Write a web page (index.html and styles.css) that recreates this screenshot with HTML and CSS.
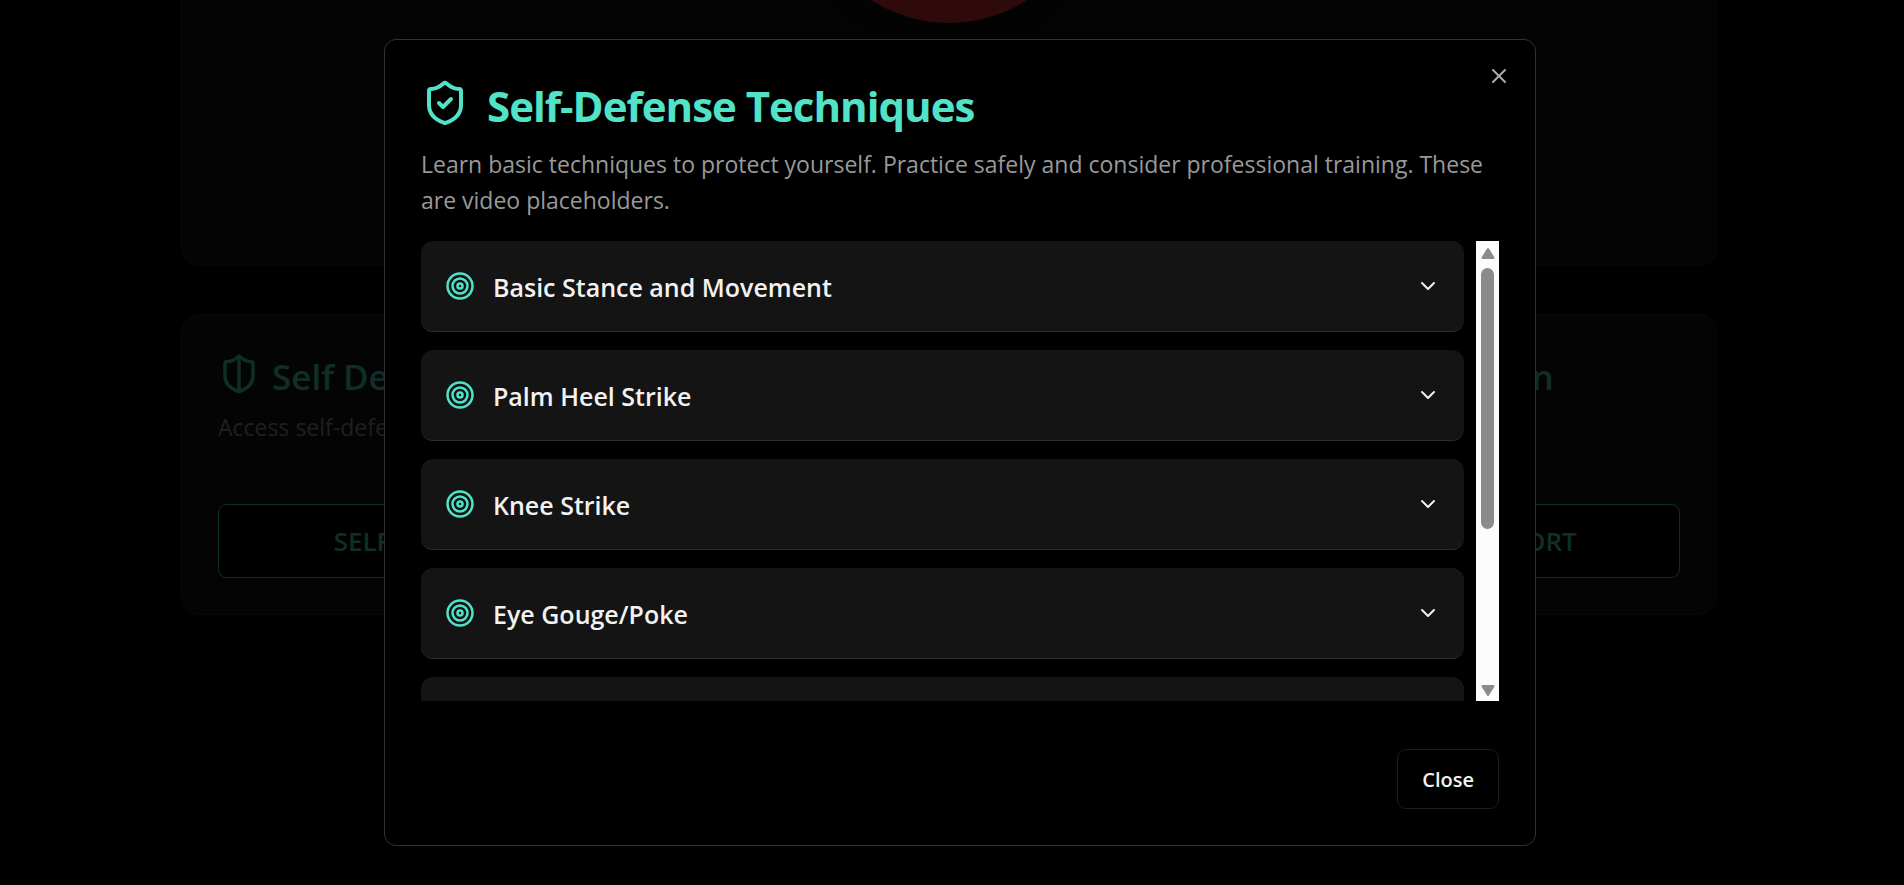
FILE: index.html
```html
<!DOCTYPE html>
<html lang="en">
<head>
<meta charset="utf-8">
<meta name="viewport" content="width=device-width, initial-scale=1">
<title>Self-Defense Techniques</title>
<link rel="stylesheet" href="styles.css">
</head>
<body>
<svg class="sprite" aria-hidden="true">
  <symbol id="target" viewBox="0 0 24 24"><circle cx="12" cy="12" r="10"/><circle cx="12" cy="12" r="6"/><circle cx="12" cy="12" r="2"/></symbol>
  <symbol id="chevron" viewBox="0 0 24 24"><path d="m6 9 6 6 6-6"/></symbol>
</svg>

<main class="page">
  <section class="panel">
    <div class="sos"></div>
  </section>
  <div class="features">
    <section class="card">
      <h2 class="card-title">
        <svg class="icon card-icon" viewBox="0 0 24 24"><path d="M20 13c0 5-3.5 7.5-7.66 8.95a1 1 0 0 1-.67-.01C7.5 20.5 4 18 4 13V6a1 1 0 0 1 1-1c2 0 4.500-1.200 6.240-2.720a1.170 1.170 0 0 1 1.520 0C14.510 3.810 17 5 19 5a1 1 0 0 1 1 1z"/><path d="M12 22V2"/></svg>
        Self Defense
      </h2>
      <p class="card-text">Access self-defense</p>
      <button class="card-button" type="button">SELF DEFENSE</button>
    </section>
    <section class="card card-last">
      <h2 class="card-title">
        <span class="card-icon"></span>
        Identification
      </h2>
      <button class="card-button" type="button">CREATE REPORT</button>
    </section>
  </div>
</main>

<div class="overlay">
  <div class="dialog" role="dialog" aria-modal="true" aria-labelledby="dialog-title" aria-describedby="dialog-text">
    <button class="dismiss" type="button" aria-label="Close dialog">
      <svg class="icon" viewBox="0 0 24 24"><path d="M18 6 6 18"/><path d="m6 6 12 12"/></svg>
    </button>
    <header class="dialog-header">
      <h1 class="dialog-title" id="dialog-title">
        <svg class="icon title-icon" viewBox="0 0 24 24"><path d="M20 13c0 5-3.5 7.5-7.66 8.95a1 1 0 0 1-.67-.01C7.5 20.5 4 18 4 13V6a1 1 0 0 1 1-1c2 0 4.500-1.200 6.240-2.720a1.170 1.170 0 0 1 1.520 0C14.510 3.810 17 5 19 5a1 1 0 0 1 1 1z"/><path d="m9 12 2 2 4-4"/></svg>
        Self-Defense Techniques
      </h1>
      <p class="dialog-text" id="dialog-text">Learn basic techniques to protect yourself. Practice safely and consider professional training. These are video placeholders.</p>
    </header>
    <div class="scroller">
      <div class="list">
        <button class="item" type="button" aria-expanded="false"><svg class="icon item-icon"><use href="#target"/></svg><span class="item-name">Basic Stance and Movement</span><svg class="icon chevron"><use href="#chevron"/></svg></button>
        <button class="item" type="button" aria-expanded="false"><svg class="icon item-icon"><use href="#target"/></svg><span class="item-name">Palm Heel Strike</span><svg class="icon chevron"><use href="#chevron"/></svg></button>
        <button class="item" type="button" aria-expanded="false"><svg class="icon item-icon"><use href="#target"/></svg><span class="item-name">Knee Strike</span><svg class="icon chevron"><use href="#chevron"/></svg></button>
        <button class="item" type="button" aria-expanded="false"><svg class="icon item-icon"><use href="#target"/></svg><span class="item-name">Eye Gouge/Poke</span><svg class="icon chevron"><use href="#chevron"/></svg></button>
        <div class="item"></div>
      </div>
      <div class="scrollbar" aria-hidden="true">
        <svg class="arrow" viewBox="0 0 14 12"><path d="M7 2 12 10H2z"/></svg>
        <div class="track"><div class="thumb"></div></div>
        <svg class="arrow" viewBox="0 0 14 12"><path d="M7 10 2 2h10z"/></svg>
      </div>
    </div>
    <footer class="dialog-footer">
      <button class="close-button" type="button">Close</button>
    </footer>
  </div>
</div>
</body>
</html>
```
FILE: styles.css
```css
* { box-sizing: border-box; }

body {
  margin: 0;
  height: 100vh;
  overflow: hidden;
  background: #000;
  color: #f2f2f2;
  font-family: "Open Sans", "Noto Sans", sans-serif;
}

h1, h2, p { margin: 0; }

button {
  font: inherit;
  color: inherit;
  cursor: pointer;
}

.sprite { position: absolute; width: 0; height: 0; }

.icon {
  flex: none;
  fill: none;
  stroke: currentColor;
  stroke-width: 2;
  stroke-linecap: round;
  stroke-linejoin: round;
}

/* Page behind the dialog */
.page {
  padding-right: 6px;
}

.panel,
.features {
  max-width: 1536px;
  margin: 0 auto;
}

.panel {
  height: 266px;
  overflow: hidden;
  border: 1px solid #282828;
  border-top: 0;
  border-radius: 0 0 18px 18px;
  background: #141414;
}

.sos {
  width: 288px;
  height: 288px;
  margin: -265px auto 0;
  border-radius: 50%;
  background: #e53935;
  box-shadow: 0 15px 23px -5px rgba(0, 0, 0, .3);
}

.features {
  display: grid;
  grid-template-columns: repeat(3, 1fr);
  gap: 48px;
  margin-top: 48px;
}

.card {
  display: flex;
  flex-direction: column;
  min-height: 301px;
  padding: 36px;
  border: 1px solid #282828;
  border-radius: 18px;
  background: #141414;
}

.card-last { grid-column: 3; }

.card-title {
  display: flex;
  align-items: center;
  gap: 12px;
  margin-bottom: 6px;
  color: #50e3c8;
  font-size: 35px;
  font-weight: 600;
  line-height: 52px;
  white-space: nowrap;
}

.card-icon {
  width: 42px;
  height: 42px;
  margin-bottom: 6px;
}

.card-text {
  color: #999;
  font-size: 23px;
  line-height: 36px;
}

.card-button {
  height: 74px;
  margin-top: auto;
  border: 1px solid #50e3c8;
  border-radius: 9px;
  background: #000;
  color: #50e3c8;
  font-size: 26px;
  font-weight: 600;
}

/* Dialog */
.overlay {
  position: fixed;
  inset: 0;
  display: flex;
  align-items: center;
  justify-content: center;
  padding-left: 16px;
  background: rgba(0, 0, 0, .8);
}

.dialog {
  position: relative;
  width: 100%;
  max-width: 1152px;
  padding: 36px;
  border: 1px solid #333;
  border-radius: 12px;
  background: #000;
}

.dismiss {
  position: absolute;
  top: 24px;
  right: 24px;
  display: flex;
  padding: 0;
  border: 0;
  background: none;
  opacity: .7;
}

.dismiss .icon { width: 24px; height: 24px; }

.dialog-header { margin-bottom: 23px; }

.dialog-title {
  display: flex;
  align-items: center;
  gap: 18px;
  margin-bottom: 10px;
  color: #50e3c8;
  font-size: 42px;
  font-weight: 700;
  line-height: 60px;
  letter-spacing: -1px;
}

.title-icon {
  width: 48px;
  height: 48px;
  margin-bottom: 6px;
}

.dialog-text {
  color: #999;
  font-size: 23px;
  line-height: 36px;
}

.scroller {
  display: flex;
  gap: 12px;
  height: 52vh;
}

.list {
  flex: 1;
  display: flex;
  flex-direction: column;
  gap: 18px;
  overflow: hidden;
}

.item {
  flex: none;
  display: flex;
  align-items: center;
  gap: 18px;
  width: 100%;
  height: 91px;
  padding: 0 24px;
  border: 0;
  border-bottom: 1px solid #2c2c2c;
  border-radius: 12px;
  background: #141414;
  text-align: left;
}

.item-icon { width: 30px; height: 30px; color: #50e3c8; }

.item-name {
  flex: 1;
  padding-top: 2px;
  font-size: 25px;
  font-weight: 600;
  line-height: 42px;
}

.chevron { width: 24px; height: 24px; }

.scrollbar {
  display: flex;
  flex-direction: column;
  align-items: center;
  justify-content: space-between;
  width: 23px;
  padding: 6px 0 4px;
  background: #fcfcfc;
}

.arrow {
  width: 16px;
  height: 13px;
  fill: #8b8b8b;
  stroke: #8b8b8b;
  stroke-width: 2;
  stroke-linejoin: round;
}

.track {
  flex: 1;
  width: 13px;
  padding: 8px 0;
}

.thumb {
  height: 64%;
  border-radius: 7px;
  background: #8b8b8b;
}

.dialog-footer {
  display: flex;
  justify-content: flex-end;
  margin-top: 48px;
}

.close-button {
  height: 60px;
  padding: 0 24px;
  border: 1px solid #1c1c1c;
  border-radius: 9px;
  background: #000;
  font-size: 20px;
  font-weight: 600;
}
```
